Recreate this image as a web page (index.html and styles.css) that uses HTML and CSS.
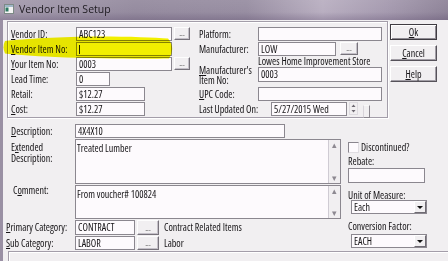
FILE: index.html
```html
<!DOCTYPE html>
<html lang="en">
<head>
    <meta charset="UTF-8">
    <title>Vendor Item Setup</title>
    <link rel="stylesheet" href="styles.css">
</head>
<body>
<div class="window">
    <div class="titlebar">
        <svg class="app-icon" width="10" height="10" viewBox="0 0 10 10">
            <rect x="0.5" y="0.5" width="9" height="9" fill="#f4f4f4" stroke="#7d8a86"/>
            <rect x="1" y="1" width="8" height="2" fill="#9fb7c8"/>
            <rect x="1.5" y="3.5" width="3" height="4" fill="#2d7a62"/>
        </svg>
        <span>Vendor Item Setup</span>
    </div>

    <div class="client">
        <div class="top-row">
            <div class="group">
                <div class="col col-left">
                    <div class="row"><span class="lbl"><u>V</u>endor ID:</span><div class="field w96">ABC123</div><button class="dots">...</button></div>
                    <div class="row"><span class="lbl"><u>V</u>endor Item No:</span><div class="field w96"><span class="caret"></span></div></div>
                    <div class="row"><span class="lbl"><u>Y</u>our Item No:</span><div class="field w96">0003</div><button class="dots">...</button></div>
                    <div class="row"><span class="lbl">Lead Time:</span><div class="field w34">0</div></div>
                    <div class="row"><span class="lbl">Retail:</span><div class="field w69">$12.27</div></div>
                    <div class="row"><span class="lbl"><u>C</u>ost:</span><div class="field w69">$12.27</div></div>
                </div>
                <div class="col col-right">
                    <div class="row"><span class="lbl lbl-r">Platform:</span><div class="field w124"></div></div>
                    <div class="row"><span class="lbl lbl-r">Manufacturer:</span><div class="field w78">LOW</div><button class="dots dots-wide">...</button></div>
                    <div class="mfr-name">Lowes Home Improvement Store</div>
                    <div class="row row-tall"><span class="lbl lbl-r lbl-two"><u>M</u>anufacturer's<br>Item No:</span><div class="field w124 field-tall">0003</div></div>
                    <div class="row"><span class="lbl lbl-r"><u>U</u>PC Code:</span><div class="field w124"></div></div>
                    <div class="row">
                        <span class="lbl lbl-date">Last Updated On:</span>
                        <div class="field w76">5/27/2015 Wed</div>
                        <div class="spin">
                            <svg width="9" height="13" viewBox="0 0 9 13">
                                <path d="M2.5 5 L4.5 2.5 L6.5 5 Z" fill="#6c6870"/>
                                <path d="M2.5 8 L4.5 10.5 L6.5 8 Z" fill="#6c6870"/>
                            </svg>
                        </div>
                        <div class="stub"></div>
                    </div>
                </div>
            </div>
            <div class="actions">
                <button class="btn btn-default"><u>O</u>k</button>
                <button class="btn"><u>C</u>ancel</button>
                <button class="btn"><u>H</u>elp</button>
            </div>
        </div>

        <div class="bottom">
            <div class="form">
                <span class="lbl-b"><u>D</u>escription:</span>
                <div class="field w210">4X4X10</div>

                <span class="lbl-b lbl-ext">E<u>x</u>tended<br>Description:</span>
                <div class="memo">
                    <div class="memo-text">Treated Lumber</div>
                    <div class="memo-scroll"><span class="arr">&#9652;</span><span class="arr">&#9662;</span></div>
                </div>

                <span class="lbl-b lbl-comment">C<u>o</u>mment:</span>
                <div class="memo">
                    <div class="memo-text">From voucher# 100824</div>
                    <div class="memo-scroll"><span class="arr">&#9652;</span><span class="arr">&#9662;</span></div>
                </div>

                <span class="lbl-b lbl-out lbl-cat"><u>P</u>rimary Category:</span>
                <div class="cat-row"><div class="field w60 field-cat">CONTRACT</div><button class="dots dots-cat">...</button><span class="cat-text">Contract Related Items</span></div>

                <span class="lbl-b lbl-out"><u>S</u>ub Category:</span>
                <div class="cat-row"><div class="field w60">LABOR</div><button class="dots dots-cat dots-sub">...</button><span class="cat-text">Labor</span></div>
            </div>

            <div class="side">
                <div class="check-row"><span class="checkbox"></span><span>Discontinued?</span></div>
                <div class="side-lbl side-rebate">Rebate:</div>
                <div class="field w77 field-rebate"></div>
                <div class="side-lbl">Unit of Measure:</div>
                <div class="combo"><span>Each</span><span class="drop"></span></div>
                <div class="side-lbl">Conversion Factor:</div>
                <div class="combo combo-last"><span>EACH</span><span class="drop"></span></div>
            </div>
        </div>

        <div class="footer-box"></div>
    </div>

    <svg class="highlight" width="180" height="62" viewBox="0 0 180 62">
        <path d="M5 41 C 25 39, 60 36.5, 100 36.5 C 130 36.5, 155 37.5, 168 38.5 Q 176 48, 169 58.5 C 140 59, 95 58.5, 55 57 C 32 56, 14 54.5, 5 53.5 Q 2 47, 5 41 Z" fill="#f4f400"/>
    </svg>
</div>
</body>
</html>
```
FILE: styles.css
```css
body {
    margin: 0;
    background: #f1eff1;
    font-family: "Open Sans", "Liberation Sans", sans-serif;
    font-stretch: 75%;
    font-size: 10px;
    color: #161417;
}
.window {
    position: relative;
    width: 448px;
    height: 261px;
    overflow: hidden;
    background: #f1eff1;
}
.titlebar {
    height: 20px;
    box-sizing: border-box;
    display: flex;
    align-items: center;
    padding: 0 0 2px 4px;
    font-stretch: 100%;
    font-size: 10.5px;
    color: #1d1a20;
    background:
        linear-gradient(to bottom, rgba(255,255,255,0.06) 0, rgba(255,255,255,0) 60%, rgba(60,40,80,0.22) 100%),
        linear-gradient(to right, #a59cae 0%, #958b9f 30%, #988ea2 55%, #b9afc1 72%, #a69bb0 86%, #8e8398 100%);
}
.app-icon {
    margin-right: 5px;
}
.client {
    height: 241px;
    border-left: 3px solid #9a90a4;
    padding-left: 4px;
    display: flex;
    flex-direction: column;
}

/* top group */
.top-row {
    display: flex;
    margin-top: 1px;
    height: 97px;
}
.group {
    width: 381px;
    height: 97px;
    box-sizing: border-box;
    border: 1px solid #a39da9;
    box-shadow: inset 1px 1px 0 #fff, 1px 1px 0 #fff;
    display: flex;
    padding-top: 5px;
}
.col-left {
    width: 191px;
    padding-left: 3px;
    box-sizing: border-box;
}
.col-right {
    flex: 1;
}
.row {
    display: flex;
    align-items: flex-start;
    height: 15px;
}
.lbl {
    width: 65px;
    flex: none;
    white-space: nowrap;
    line-height: 14px;
}
.lbl-r {
    width: 59px;
}
.lbl-date {
    width: 72px;
}
.lbl-two {
    line-height: 10px;
    margin-top: -1px;
}
.row-tall {
    height: 21px;
}
.mfr-name {
    height: 9px;
    line-height: 9px;
    padding-left: 59px;
    white-space: nowrap;
}
.field {
    height: 14px;
    box-sizing: border-box;
    border: 1px solid #8b878f;
    background: #fdfafd;
    padding-left: 2px;
    line-height: 12px;
    white-space: nowrap;
    overflow: hidden;
    flex: none;
}
.field-tall {
    height: 15px;
    margin-top: 1px;
}
.w34 { width: 34px; }
.w60 { width: 60px; }
.w69 { width: 69px; }
.w76 { width: 76px; }
.w77 { width: 77px; }
.w78 { width: 78px; }
.w96 { width: 96px; }
.w124 { width: 124px; }
.w210 { width: 210px; }
.caret {
    display: inline-block;
    width: 1px;
    height: 9px;
    margin-top: 2px;
    background: #222;
    vertical-align: top;
}
.dots {
    width: 16px;
    height: 13px;
    margin-left: 2px;
    padding: 0 0 2px 0;
    box-sizing: border-box;
    border: 1px solid;
    border-color: #fdfdfd #77737b #77737b #fdfdfd;
    box-shadow: inset -1px -1px 0 #c4c0c8;
    background: #f1eff1;
    font: inherit;
    font-size: 8px;
    line-height: 8px;
    color: #444;
    display: flex;
    align-items: flex-end;
    justify-content: center;
}
.dots-wide {
    width: 18px;
    margin-left: 4px;
}
.spin {
    width: 9px;
    height: 13px;
    margin-left: 2px;
    box-sizing: border-box;
    border: 1px solid #dedbe0;
    display: flex;
}
.spin svg {
    margin: -1px;
}
.stub {
    width: 7px;
    height: 13px;
    margin: 3px 0 0 5px;
    box-sizing: border-box;
    border: 1px solid;
    border-color: #f8f8f8 #8a868e #8a868e #d8d4da;
}

/* buttons */
.actions {
    display: flex;
    flex-direction: column;
    gap: 5px;
    margin-left: 2px;
    padding-top: 3px;
}
.btn {
    width: 47px;
    height: 16px;
    padding: 0;
    box-sizing: border-box;
    border: 1px solid;
    border-color: #fff #56525a #56525a #fff;
    box-shadow: inset -1px -1px 0 #a29ea6;
    background: #f1eff1;
    font: inherit;
    color: #161417;
    line-height: 12px;
}
.btn-default {
    border-color: #3f3c42;
    box-shadow: inset 1px 1px 0 #fff, inset -1px -1px 0 #8e8a92;
}

/* lower area */
.bottom {
    display: flex;
    margin-top: 6px;
    padding-left: 4px;
}
.form {
    width: 330px;
    display: grid;
    grid-template-columns: 64px 266px;
    grid-template-rows: 14px 45px 34px 15px 14px;
    row-gap: 1px;
}
.lbl-b {
    white-space: nowrap;
    line-height: 14px;
}
.lbl-ext {
    line-height: 11px;
    padding-top: 3px;
}
.lbl-comment {
    line-height: 11px;
    margin-left: 2px;
}
.lbl-out {
    margin-left: -5px;
}
.lbl-cat {
    line-height: 15px;
}
.memo {
    display: flex;
    border: 1px solid #8b878f;
    background: #fdfafd;
    box-sizing: border-box;
}
.memo-text {
    flex: 1;
    padding: 2px 1px;
    line-height: 12px;
}
.memo-scroll {
    width: 11px;
    border-left: 1px solid #cfcbd3;
    background: #f1eff1;
    display: flex;
    flex-direction: column;
    justify-content: space-between;
    align-items: center;
    color: #8d8991;
    font-size: 9px;
    line-height: 10px;
}
.cat-row {
    display: flex;
    align-items: flex-start;
}
.field-cat {
    height: 15px;
}
.dots-cat {
    width: 22px;
    height: 15px;
}
.dots-sub {
    height: 14px;
}
.cat-text {
    margin-left: 5px;
    line-height: 15px;
    white-space: nowrap;
}
.side {
    margin-left: 7px;
    padding-top: 17px;
    display: flex;
    flex-direction: column;
    align-items: flex-start;
}
.check-row {
    display: flex;
    align-items: center;
    gap: 2px;
    height: 12px;
    line-height: 12px;
}
.checkbox {
    width: 11px;
    height: 11px;
    box-sizing: border-box;
    border: 1px solid;
    border-color: #8a868e #e0dde2 #e0dde2 #8a868e;
    background: #fdfafd;
}
.side-lbl {
    margin-top: 7px;
    line-height: 10px;
    white-space: nowrap;
}
.side-rebate {
    margin-top: 3px;
}
.field-rebate {
    height: 15px;
    margin-top: 2px;
}
.combo {
    width: 76px;
    height: 14px;
    margin: 0 0 0 3px;
    box-sizing: border-box;
    border: 1px solid #8b878f;
    background: #fdfafd;
    display: flex;
    align-items: center;
    justify-content: space-between;
    padding-left: 2px;
    line-height: 12px;
}
.combo-last {
    margin-top: 3px;
}
.drop {
    width: 12px;
    height: 12px;
    box-sizing: border-box;
    border: 1px solid;
    border-color: #fff #6f6b73 #6f6b73 #fff;
    background: #f1eff1;
    display: flex;
    align-items: center;
    justify-content: center;
}
.drop::after {
    content: "";
    border-left: 3px solid transparent;
    border-right: 3px solid transparent;
    border-top: 3px solid #111;
}
.footer-box {
    flex: 1;
    margin: 1px 0 0 1px;
    border-top: 1px solid #a39da9;
    border-left: 1px solid #a39da9;
    box-shadow: inset 1px 1px 0 #fff;
}

/* marker stroke drawn over the form */
.highlight {
    position: absolute;
    left: 0;
    top: 0;
    pointer-events: none;
    mix-blend-mode: multiply;
}
```
